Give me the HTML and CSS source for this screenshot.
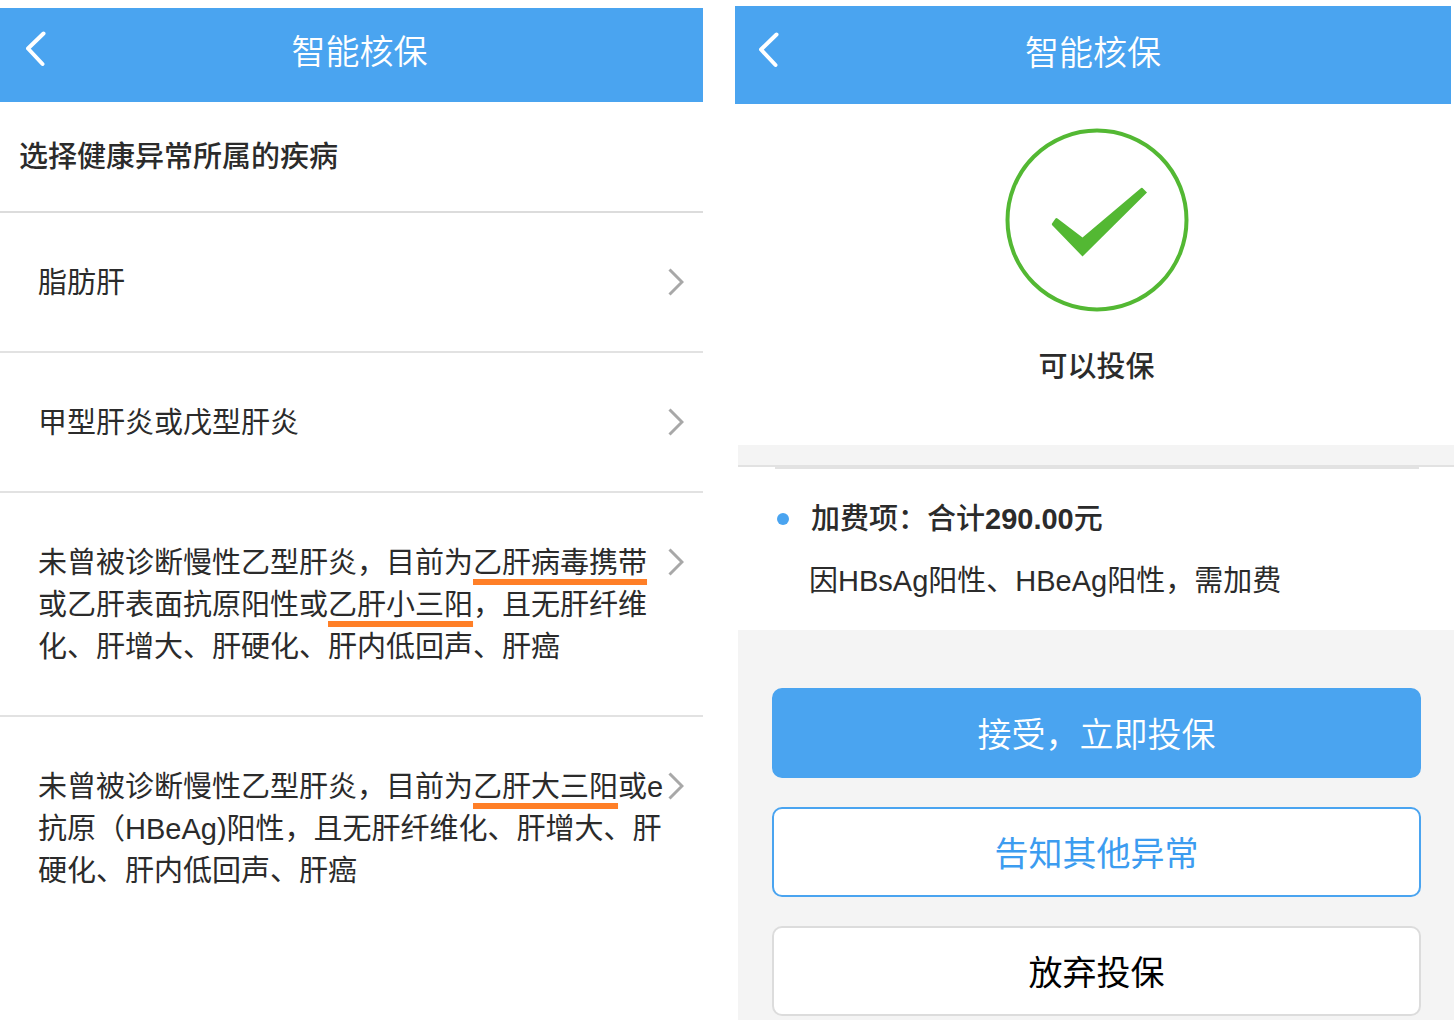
FILE: index.html
```html
<!DOCTYPE html>
<html lang="zh-CN">
<head>
  <meta charset="UTF-8" />
  <meta name="viewport" content="width=device-width, initial-scale=1.0"/>
  <title>智能核保</title>
  <link rel="stylesheet" href="styles.css">
</head>
<body>
  <div class="screens">
    <!-- Disease list -->
    <section class="screen">
      <header class="bar bar-list">
        <button class="back" type="button" aria-label="返回">
          <svg width="20" height="36" viewBox="0 0 20 36"><path d="M17.5 2.5 2 17.5 16.5 33" /></svg>
        </button>
        <h1>智能核保</h1>
      </header>
      <h2 class="list-title">选择健康异常所属的疾病</h2>
      <ul class="diseases">
        <li>
          <a href="#">
            <span class="name">脂肪肝</span>
            <svg class="arrow" width="16" height="28" viewBox="0 0 16 28"><path d="M1.5 1.5 14 14 1.5 26.5" /></svg>
          </a>
        </li>
        <li>
          <a href="#">
            <span class="name">甲型肝炎或戊型肝炎</span>
            <svg class="arrow" width="16" height="28" viewBox="0 0 16 28"><path d="M1.5 1.5 14 14 1.5 26.5" /></svg>
          </a>
        </li>
        <li>
          <a href="#">
            <span class="name">未曾被诊断慢性乙型肝炎，目前为<mark>乙肝病毒携带</mark>或乙肝表面抗原阳性或<mark>乙肝小三阳</mark>，且无肝纤维化、肝增大、肝硬化、肝内低回声、肝癌</span>
            <svg class="arrow" width="16" height="28" viewBox="0 0 16 28"><path d="M1.5 1.5 14 14 1.5 26.5" /></svg>
          </a>
        </li>
        <li>
          <a href="#">
            <span class="name">未曾被诊断慢性乙型肝炎，目前为<mark>乙肝大三阳</mark>或e抗原（HBeAg)阳性，且无肝纤维化、肝增大、肝硬化、肝内低回声、肝癌</span>
            <svg class="arrow" width="16" height="28" viewBox="0 0 16 28"><path d="M1.5 1.5 14 14 1.5 26.5" /></svg>
          </a>
        </li>
      </ul>
    </section>

    <!-- Result -->
    <section class="screen">
      <header class="bar bar-result">
        <button class="back" type="button" aria-label="返回">
          <svg width="20" height="36" viewBox="0 0 20 36"><path d="M17.5 2.5 2 17.5 16.5 33" /></svg>
        </button>
        <h1>智能核保</h1>
      </header>
      <div class="result">
        <svg width="184" height="184" viewBox="0 0 184 184">
          <circle cx="92" cy="92" r="89.5" />
          <path d="M52.5 90.5Q51.5 89.5 50.5 90.5L47 95.5Q46.5 96.5 47.5 97.5L77.5 128.5 142 64.5 137.5 60Q136.5 59.5 135.5 60.5L77.5 109.5Z" />
        </svg>
        <p>可以投保</p>
      </div>
      <div class="details">
        <div class="fee">
          <h2>加费项：合计<b>290.00</b>元</h2>
          <p>因HBsAg阳性、HBeAg阳性，需加费</p>
        </div>
      </div>
      <div class="actions">
        <button class="primary" type="button">接受，立即投保</button>
        <button class="outline" type="button">告知其他异常</button>
        <button class="plain" type="button">放弃投保</button>
      </div>
    </section>
  </div>
</body>
</html>
```
FILE: styles.css
```css
* {
  box-sizing: border-box;
}

body {
  margin: 0;
  background: #fff;
  color: #2b2b2b;
  font-family: 'Liberation Sans', 'Noto Sans CJK SC', sans-serif;
  font-size: 29px;
  line-height: 42px;
}

h1, h2, p, ul {
  margin: 0;
  padding: 0;
}

button {
  font-family: inherit;
  cursor: pointer;
}

.screens {
  display: grid;
  grid-template-columns: 703fr 719fr;
  gap: 32px;
}

/* Top bar */
.bar {
  display: flex;
  align-items: center;
  background: #4aa4f0;
  color: #fff;
}

.bar-list {
  height: 94px;
  margin-top: 8px;
  padding: 0 30px 6px 26px;
}

.bar-result {
  height: 98px;
  margin: 6px 3px 0 0;
  padding: 0 44px 4px 24px;
}

.bar h1 {
  flex: 1;
  font-size: 34px;
  font-weight: 350;
  text-align: center;
}

.back {
  display: flex;
  padding: 0 0 6px;
  border: none;
  background: none;
}

.back path {
  fill: none;
  stroke: #fff;
  stroke-width: 4;
  stroke-linecap: round;
  stroke-linejoin: round;
}

/* Disease list */
.list-title {
  padding: 34px 19px 33px;
  border-bottom: 2px solid #dcdcdc;
  font-size: 29px;
  font-weight: 500;
}

.diseases {
  list-style: none;
}

.diseases li + li {
  border-top: 2px solid #e2e2e2;
}

.diseases a {
  display: flex;
  justify-content: space-between;
  padding: 49px 19px 47px 38px;
  color: inherit;
  text-decoration: none;
}

.name {
  flex: 1;
}

mark {
  background: none;
  color: inherit;
  text-decoration: underline 6px #ff7f27;
  text-underline-offset: 6px;
  text-decoration-skip-ink: none;
}

.arrow {
  flex: none;
  margin-top: 6px;
}

.arrow path {
  fill: none;
  stroke: #a8a8a8;
  stroke-width: 3;
}

/* Result */
.result {
  display: flex;
  flex-direction: column;
  align-items: center;
  gap: 34px;
  margin-left: 4px;
  padding: 24px 0 57px;
  font-weight: 500;
}

.result circle {
  fill: none;
  stroke: #53b833;
  stroke-width: 4;
}

.result path {
  fill: #53b833;
}

.details {
  margin-left: 3px;
  border-top: 20px solid #f4f4f4;
}

.details::before {
  content: "";
  display: block;
  border-top: 2px solid #e2e2e2;
}

.fee {
  margin: 0 35px 0 37px;
  padding: 29px 0 28px;
  border-top: 2px solid #e2e2e2;
}

.fee h2 {
  display: flex;
  align-items: center;
  font-size: 29px;
  font-weight: 500;
}

.fee h2::before {
  content: "";
  width: 12px;
  height: 12px;
  margin: 0 22px 0 2px;
  border-radius: 50%;
  background: #4aa4f0;
}

.fee p {
  margin-top: 20px;
  padding-left: 34px;
}

.actions {
  display: flex;
  flex-direction: column;
  gap: 29px;
  margin-left: 3px;
  padding: 58px 33px 4px 34px;
  background: #f4f4f4;
}

.actions button {
  height: 90px;
  padding: 0 0 2px;
  border: 2px solid #4aa4f0;
  border-radius: 10px;
  background: #fff;
  font-size: 34px;
}

.actions .primary {
  background: #4aa4f0;
  color: #fff;
  font-weight: 350;
}

.actions .outline {
  color: #3c9cf0;
}

.actions .plain {
  border-color: #dcdcdc;
  color: #000;
}
```
